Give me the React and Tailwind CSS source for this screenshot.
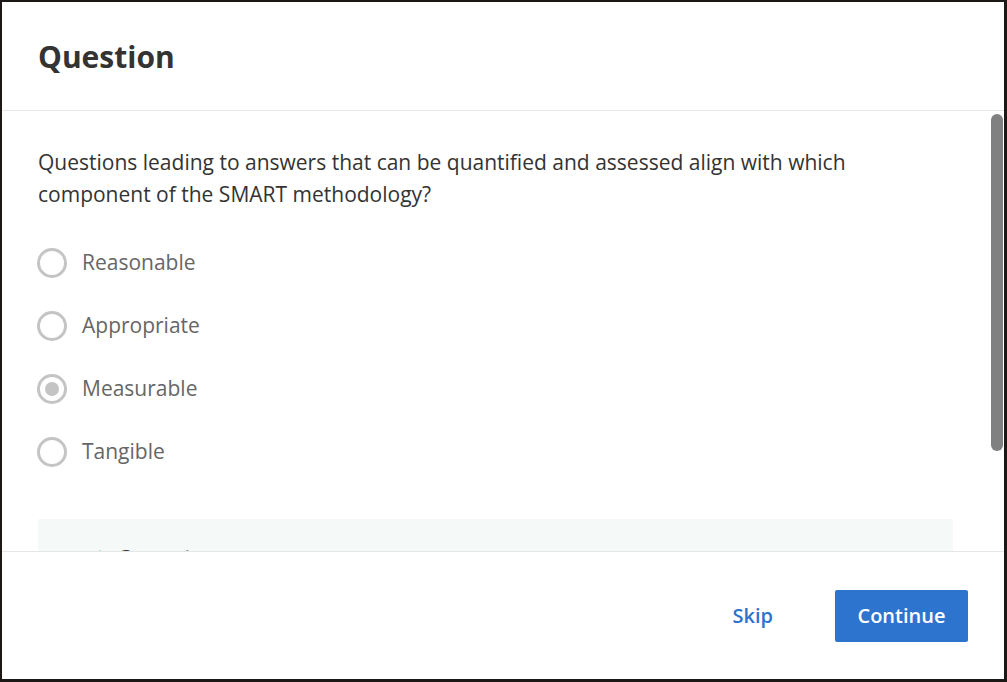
import React, { useState } from "react";

const options = ["Reasonable", "Appropriate", "Measurable", "Tangible"];

const App = () => {
  const [selected, setSelected] = useState("Measurable");

  return (
    <div
      className="h-[682px] w-[1007px] bg-[#1c1816] pt-[2px] pl-[2px] pr-[3px] pb-[3px]"
      style={{ fontFamily: '"Open Sans", "Liberation Sans", sans-serif' }}
    >
      <div className="flex h-full flex-col bg-white">
        {/* Header */}
        <div className="flex h-[109px] shrink-0 items-center border-b border-[#e6e6e6] pl-[36px]">
          <h1 className="text-[30px] font-bold text-[#333333]">Question</h1>
        </div>

        {/* Body */}
        <div className="relative flex-1 overflow-hidden">
          <div className="pl-[36px] pr-[51px] pt-[35px]">
            <p className="max-w-[860px] text-[21px] leading-[32px] text-[#333333]">
              Questions leading to answers that can be quantified and assessed align with which
              component of the SMART methodology?
            </p>

            <div className="mt-[38px] flex flex-col gap-[33px]">
              {options.map((opt) => (
                <label
                  key={opt}
                  className="flex h-[30px] cursor-pointer items-center gap-[15px]"
                  onClick={() => setSelected(opt)}
                >
                  <span className="-ml-[1px] flex h-[30px] w-[30px] items-center justify-center rounded-full border-[3px] border-[#c4c4c4]">
                    {selected === opt && (
                      <span className="h-[14px] w-[14px] rounded-full bg-[#c4c4c4]" />
                    )}
                  </span>
                  <span className="text-[21px] text-[#666666]">{opt}</span>
                </label>
              ))}
            </div>

            <div className="mt-[52px] bg-[#f5f9f8] pl-[55px] pt-[23px] pb-6">
              <div className="flex items-start gap-[11px]">
                <svg width="14" height="14" viewBox="0 0 14 14" className="mt-[7px]">
                  <path d="M7 1 L13 12 L1 12 Z" fill="#1e9e6a" />
                </svg>
                <span className="text-[20px] font-bold text-[#333333]">Correct</span>
              </div>
            </div>
          </div>

          {/* scrollbar */}
          <div className="absolute right-[1px] top-[3px] h-[337px] w-[12px] rounded-full bg-[#808080]" />
        </div>

        {/* Footer */}
        <div className="flex h-[128px] shrink-0 items-center justify-end gap-[62px] border-t border-[#e6e6e6] pr-[36px]">
          <button className="text-[20px] font-semibold text-[#2b73cc]">Skip</button>
          <button className="h-[52px] w-[133px] rounded-[2px] bg-[#2d74cf] text-[20px] font-semibold text-white">
            Continue
          </button>
        </div>
      </div>
    </div>
  );
};

export default App;
